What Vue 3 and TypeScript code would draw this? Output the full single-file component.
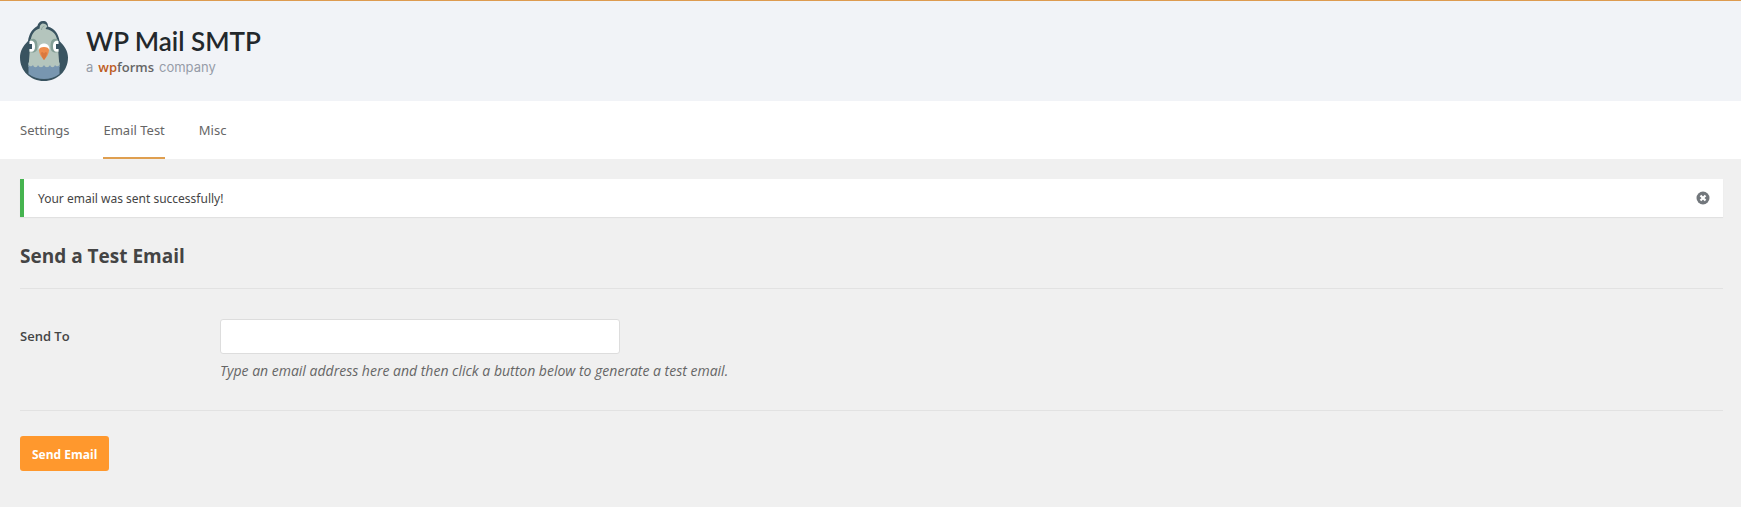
<script setup lang="ts">
import { ref } from 'vue'

interface Tab {
  id: string
  label: string
}

const tabs: Tab[] = [
  { id: 'settings', label: 'Settings' },
  { id: 'test', label: 'Email Test' },
  { id: 'misc', label: 'Misc' },
]

const activeTab = ref('test')
const noticeVisible = ref(true)
const recipient = ref('')

function sendEmail(): void {
  noticeVisible.value = true
}
</script>

<template>
  <div class="page">
    <header class="header">
      <svg class="mascot" viewBox="0 0 48 60" aria-hidden="true">
        <path
          d="M23 0c-3 0-5 2-5.600 5C12 8 9 13 8 20 3 25 0 30 0 36.500 0 50 10.500 60 24 60s24-10 24-23.500C48 30 44.500 25 39.500 20 38.500 13 35 8 28 5.500 28 2 26.500 0 23 0z"
          fill="#395360"
        />
        <path
          d="M22.500 2.500c-2 .500-3 2.500-2.800 5C14 9 11 14 10.500 21L8.500 46h31L37.500 21C37 14 33 9 25.500 8c1-2 2-2.500 2-2.500-1-2-2.500-3-5-3z"
          fill="#b4c5bd"
        />
        <path d="M21.500 9c0-2 1-3.500 3-4" fill="none" stroke="#8fa7a0" stroke-width="1" />
        <path
          d="M8.500 42h31v11C35 56.500 30 58 24 58S13 56.500 8.500 53z"
          fill="#7896b0"
        />
        <path
          d="M8.500 41.500V44c1.500 2 3.500 1.500 4.500 0 1 3 4 3 5 0 1.500 3 4.500 3 6 0 1.500 3 4.500 3 6 0 1 3 4 3 5 0 1 1.500 3 2 4.500 0v-2.500z"
          fill="#b4c5bd"
        />
        <path d="M10 18.500c6-2.500 7.500 2 7.500 7s-2.500 7-8 5.500zM38 18.500c-6-2.500-7.500 2-7.500 7s2.500 7 8 5.500z" fill="#849f96" />
        <path d="M9.500 20c4-1 5.500 1.500 5.500 5.500s-1.500 6-5.500 5zM38.500 20c-4-1-5.500 1.500-5.500 5.500s1.500 6 5.500 5z" fill="#fff" />
        <path d="M9 23h3v5H9zM36 23h3v5h-3z" fill="#395360" />
        <path d="M18.500 28.500c0-4 2.500-6 5.500-6s5.500 2 5.500 6z" fill="#fff" />
        <path d="M19 29c0-2 2-3 5-3s5 1 5 3c0 4-2.500 7-5 10-2.500-3-5-6-5-10z" fill="#ee8c4c" />
        <path d="M21 32c1-1.500 2-1 3 .500 1-1.500 2-2 3-.500-.500 3-1.500 5-3 7-1.500-2-2.500-4-3-7z" fill="#d97940" />
      </svg>
      <div class="brand">
        <h1 class="brand-name">WP Mail SMTP</h1>
        <p class="brand-line">
          <span>a</span>
          <span class="forms"><span class="wp">wp</span>forms</span>
          <span>company</span>
        </p>
      </div>
    </header>

    <nav class="tabs">
      <a
        v-for="tab in tabs"
        :key="tab.id"
        :href="'#' + tab.id"
        class="tab"
        :class="{ active: tab.id === activeTab }"
        @click.prevent="activeTab = tab.id"
        >{{ tab.label }}</a
      >
    </nav>

    <main class="content">
      <div v-if="noticeVisible" class="notice" role="status">
        <p>Your email was sent successfully!</p>
        <button type="button" class="dismiss" aria-label="Dismiss this notice" @click="noticeVisible = false">
          <svg viewBox="0 0 14 14" aria-hidden="true">
            <circle cx="7" cy="7" r="6.500" fill="#72777c" />
            <path d="M4.500 4.500l5 5M9.500 4.500l-5 5" stroke="#fff" stroke-width="2.200" />
          </svg>
        </button>
      </div>

      <form @submit.prevent="sendEmail">
        <h2 class="title">Send a Test Email</h2>
        <div class="row">
          <label class="label" for="recipient">Send To</label>
          <div class="field">
            <input id="recipient" v-model="recipient" type="email" aria-describedby="recipient-help" />
            <p id="recipient-help" class="help">
              Type an email address here and then click a button below to generate a test email.
            </p>
          </div>
        </div>
        <button type="submit" class="send">Send Email</button>
      </form>
    </main>
  </div>
</template>

<style>
body {
  margin: 0;
  background: #f0f0f0;
}
</style>

<style scoped>
.page {
  min-height: 100vh;
  font-family: "Noto Sans", "Open Sans", sans-serif;
  font-size: 13px;
  line-height: 20px;
  color: #444;
  background: #f0f0f0;
}
h1,
h2,
p {
  margin: 0;
}
.header {
  display: flex;
  align-items: flex-start;
  gap: 18px;
  padding: 20px 20px;
  border-top: 1px solid #dd9b4f;
  background: #f1f3f7;
}
.mascot {
  width: 48px;
  height: 60px;
}
.brand {
  padding-top: 4px;
}
.brand-name {
  font-family: Lato, sans-serif;
  font-size: 26px;
  line-height: 32px;
  font-weight: 600;
  color: #23282c;
}
.brand-line {
  display: flex;
  align-items: baseline;
  gap: 5px;
  font-family: Inter, sans-serif;
  font-size: 13px;
  line-height: 20px;
  color: #969ca8;
}
.forms {
  font-family: "Open Sans", sans-serif;
  font-size: 13px;
  font-weight: 600;
  color: #666;
}
.wp {
  color: #bd5b22;
}
.tabs {
  display: flex;
  gap: 34px;
  padding: 0 20px;
  background: #fff;
}
.tab {
  padding: 19px 0 17px;
  border-bottom: 2px solid transparent;
  color: #666;
  text-decoration: none;
}
.tab.active {
  border-color: #df9f50;
}
.content {
  padding: 20px 18px 36px 20px;
}
.notice {
  display: flex;
  align-items: center;
  justify-content: space-between;
  padding: 9px 13px 9px 14px;
  border-left: 4px solid #46b450;
  background: #fff;
  box-shadow: 0 1px 1px rgba(0, 0, 0, 0.06);
  font-size: 12px;
}
.notice p {
  padding-top: 2px;
  line-height: 18px;
}
.dismiss {
  display: flex;
  padding: 0;
  border: 0;
  background: none;
  cursor: pointer;
}
.dismiss svg {
  width: 14px;
  height: 14px;
}
.title {
  padding: 26px 0 19px;
  border-bottom: 1px solid #e2e2e2;
  font-family: "Open Sans", sans-serif;
  font-size: 19px;
  line-height: 26px;
  font-weight: 700;
  color: #444;
}
.row {
  display: flex;
  padding: 30px 0 29px;
  border-bottom: 1px solid #e2e2e2;
}
.label {
  width: 200px;
  padding-top: 7px;
  font-family: "Open Sans", sans-serif;
  font-weight: 600;
}
.field {
  flex: 1;
}
.field input {
  display: block;
  box-sizing: border-box;
  width: 400px;
  max-width: 100%;
  height: 35px;
  padding: 0 10px;
  border: 1px solid #ddd;
  border-radius: 3px;
  background: #fff;
  font: inherit;
  color: inherit;
}
.help {
  padding-top: 7px;
  font-family: "Open Sans", sans-serif;
  font-size: 14px;
  font-style: italic;
  color: #666;
}
.send {
  display: block;
  height: 35px;
  margin-top: 25px;
  padding: 1px 12px 0;
  border: 0;
  border-radius: 3px;
  background: #ff982d;
  color: #fff;
  font-family: "Open Sans", sans-serif;
  font-size: 12px;
  font-weight: 700;
  cursor: pointer;
}
</style>
